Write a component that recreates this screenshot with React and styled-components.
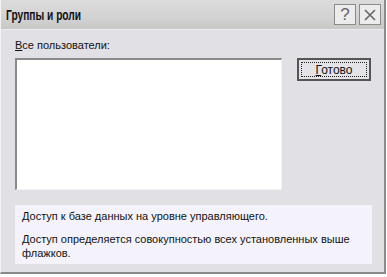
import React from "react";
import styled, { createGlobalStyle } from "styled-components";

const GlobalStyle = createGlobalStyle`
  html, body {
    margin: 0;
    padding: 0;
    background: #ffffff;
  }
  body {
    font-family: "Liberation Sans", Arial, sans-serif;
  }
`;

const Window = styled.div`
  width: 386px;
  height: 274px;
  box-sizing: border-box;
  background: #e1e0e4;
  border-right: 2px solid #8a8a8a;
  border-bottom: 2px solid #8a8a8a;
  border-left: 1px solid #f4f4f4;
  display: flex;
  flex-direction: column;
`;

const TitleBar = styled.div`
  height: 29px;
  flex-shrink: 0;
  display: flex;
  align-items: center;
  justify-content: space-between;
  padding: 0 3px 0 5px;
  background: linear-gradient(180deg, #dcdcdc 0%, #d2d2d2 60%, #c8c8c8 100%);
  border-bottom: 1px solid #ececec;
`;

// no narrow face installed, so squeeze the bold title to the condensed look
const Title = styled.h1`
  margin: 0;
  font-size: 15px;
  font-weight: bold;
  color: #111;
  transform: scaleX(0.68);
  transform-origin: left center;
  white-space: nowrap;
`;

const Controls = styled.div`
  display: flex;
  gap: 3px;
`;

const CtrlButton = styled.div`
  width: 22px;
  height: 21px;
  box-sizing: border-box;
  border: 1px solid #8c8c8c;
  background: #ececec;
  display: flex;
  align-items: center;
  justify-content: center;
  font-size: 17px;
  color: #666;
`;

const Body = styled.div`
  flex: 1;
  padding: 9px 13px 10px 14px;
  display: flex;
  flex-direction: column;
`;

const Top = styled.div`
  display: flex;
  gap: 15px;
`;

const Left = styled.div`
  display: flex;
  flex-direction: column;
`;

const Label = styled.div`
  font-size: 11px;
  color: #111;
  height: 19px;
  u {
    text-decoration: underline;
  }
`;

const ListBox = styled.div`
  width: 267px;
  height: 132px;
  box-sizing: border-box;
  background: #fff;
  border-top: 2px solid #8a8a8a;
  border-left: 2px solid #8a8a8a;
  border-right: 1px solid #f2f2f2;
  border-bottom: 1px solid #f2f2f2;
`;

const DoneButton = styled.button`
  margin-top: 19px;
  width: 74px;
  height: 23px;
  box-sizing: border-box;
  background: #e4e4e8;
  border: 2px solid #555;
  outline: 1px dotted #222;
  outline-offset: -5px;
  font-family: "Liberation Sans", Arial, sans-serif;
  font-size: 12px;
  color: #111;
  padding: 0;
  u {
    text-decoration: underline;
  }
`;

const Info = styled.div`
  margin-top: 15px;
  width: 357px;
  box-sizing: border-box;
  background: #f4f3fb;
  padding: 4px 7px 4px 7px;
  font-size: 11px;
  color: #111;
  line-height: 14px;
  p {
    margin: 0 0 9px 0;
  }
  p:last-child {
    margin-bottom: 0;
  }
`;

export default function App() {
  return (
    <>
      <GlobalStyle />
      <Window>
        <TitleBar>
          <Title>Группы и роли</Title>
          <Controls>
            <CtrlButton>?</CtrlButton>
            <CtrlButton>
              <svg width="14" height="14" viewBox="0 0 14 14">
                <path d="M2 2 L12 12 M12 2 L2 12" stroke="#666" strokeWidth="1.6" />
              </svg>
            </CtrlButton>
          </Controls>
        </TitleBar>
        <Body>
          <Top>
            <Left>
              <Label>
                <u>В</u>се пользователи:
              </Label>
              <ListBox />
            </Left>
            <DoneButton>
              <u>Г</u>отово
            </DoneButton>
          </Top>
          <Info>
            <p>Доступ к базе данных на уровне управляющего.</p>
            <p>Доступ определяется совокупностью всех установленных выше флажков.</p>
          </Info>
        </Body>
      </Window>
    </>
  );
}
